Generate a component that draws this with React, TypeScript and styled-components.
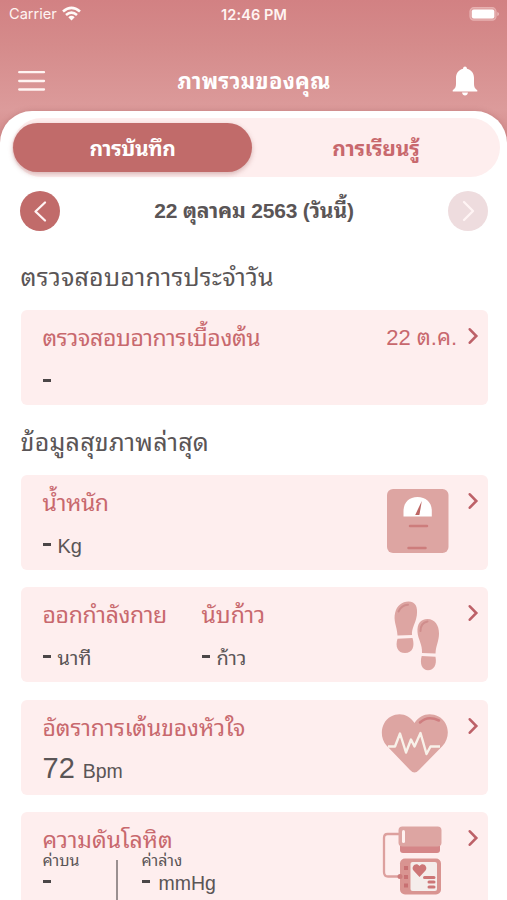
import React from "react";
import styled, { createGlobalStyle } from "styled-components";

const GlobalStyle = createGlobalStyle`
  * { box-sizing: border-box; }
  html, body { margin: 0; padding: 0; background: #fff; }
  body {
    height: 900px;
    overflow: hidden;
    font-family: "Liberation Sans", Thonburi, "Noto Sans Thai Looped", Loma, Garuda, Waree, sans-serif;
    color: #5a5556;
  }
`;

const Screen = styled.div`
  width: 507px;
  height: 900px;
  overflow: hidden;
  display: flex;
  flex-direction: column;
  background: linear-gradient(#d28183 0, #d58b8b 45px, #dc9b9b 110px, #d28a8a 145px);
`;

const StatusBar = styled.div`
  display: grid;
  grid-template-columns: 1fr auto 1fr;
  align-items: center;
  height: 28px;
  flex: none;
  padding: 0 8px 0 9px;
  color: #fff4f2;
  font-family: Inter, sans-serif;
`;

const Carrier = styled.div`
  display: flex;
  align-items: center;
  gap: 5px;
  font-size: 14.6px;
  svg { display: block; margin-top: -2px; }
`;

const Clock = styled.div`
  font-size: 14.5px;
  font-weight: 600;
  letter-spacing: 0.1px;
`;

const BatteryWrap = styled.div`
  display: flex;
  justify-content: flex-end;
`;

const NavBar = styled.header`
  display: grid;
  grid-template-columns: 28px 1fr 28px;
  justify-items: center;
  align-items: center;
  height: 83px;
  padding: 23px 28px 0 18px;
  flex: none;
  > svg { display: block; }
`;

const NavTitle = styled.div`
  padding: 1px 0 0 11px;
`;

const Text = styled.span<{ $size: number; $line?: number; $weight?: number; $track?: number; $color?: string }>`
  display: block;
  white-space: nowrap;
  font-size: ${(p) => p.$size}px;
  line-height: ${(p) => p.$line ?? 30}px;
  font-weight: ${(p) => p.$weight ?? 400};
  letter-spacing: ${(p) => p.$track ?? 0}px;
  color: ${(p) => p.$color ?? "#5a5556"};
`;

const Sheet = styled.main`
  flex: 1;
  min-height: 0;
  background: #fff;
  border-radius: 32px 32px 0 0;
  padding: 7px 7px 0 12px;
  box-shadow: 0 -1px 5px rgba(150, 80, 80, 0.25);
`;

const Tabs = styled.div`
  display: grid;
  grid-template-columns: 239px 1fr;
  align-items: center;
  height: 59px;
  padding-left: 1px;
  border-radius: 30px;
  background: #feeeee;
`;

const Tab = styled.div<{ $active?: boolean }>`
  display: flex;
  align-items: center;
  justify-content: center;
  height: 49px;
  padding-top: 2px;
  border-radius: 25px;
  background: ${(p) => (p.$active ? "#c16b6a" : "transparent")};
  box-shadow: ${(p) => (p.$active ? "0 2px 5px rgba(140, 70, 70, 0.35)" : "none")};
`;

const DateRow = styled.div`
  display: flex;
  align-items: center;
  justify-content: space-between;
  height: 68px;
  padding: 0 12px 0 8px;
`;

const RoundButton = styled.div<{ $muted?: boolean }>`
  width: 40px;
  height: 40px;
  border-radius: 50%;
  display: grid;
  place-items: center;
  background: ${(p) => (p.$muted ? "#eedcde" : "#c16b6a")};
`;

const Section = styled.section<{ $top: number; $gap: number }>`
  padding: ${(p) => p.$top}px 12px 0 8.5px;
  display: flex;
  flex-direction: column;
  gap: ${(p) => p.$gap}px;
`;

const CardList = styled.div`
  display: flex;
  flex-direction: column;
  gap: 17.4px;
`;

const Card = styled.article`
  display: grid;
  grid-template-columns: 1fr auto 24px;
  height: 95px;
  border-radius: 6px;
  background: #feeeee;
  padding-left: 22px;
`;

const Body = styled.div`
  display: flex;
  min-width: 0;
  padding-top: 13px;
`;

const Metric = styled.div<{ $width?: number }>`
  width: ${(p) => (p.$width ? `${p.$width}px` : "auto")};
`;

const ValueLine = styled.div<{ $gap: number; $top?: number; $align?: string }>`
  display: flex;
  align-items: ${(p) => p.$align ?? "center"};
  gap: ${(p) => p.$gap}px;
  padding-top: ${(p) => p.$top ?? 13}px;
`;

const EmptyValue = styled.div`
  padding-top: 26px;
`;

const Pressure = styled.div`
  padding-top: 13px;
`;

const Readings = styled.div`
  display: flex;
`;

const Reading = styled.div<{ $width?: number }>`
  width: ${(p) => (p.$width ? `${p.$width}px` : "auto")};
`;

const Divider = styled.div`
  width: 2px;
  height: 60px;
  margin: 5px 24px 0 0;
  background: #9a8f90;
`;

const ReadingValue = styled.div`
  display: flex;
  align-items: center;
  gap: 9px;
  height: 32px;
`;

const Dash = styled.span`
  display: block;
  width: 8px;
  height: 3px;
  background: #4b4647;
  ${ValueLine} & { margin-bottom: 3px; }
  ${ReadingValue} & { margin-bottom: 3px; }
`;

const IconCell = styled.div`
  width: 84px;
  svg { display: block; }
`;

const ChevronCell = styled.div`
  padding: 17px 0 0 3.5px;
  svg { display: block; }
`;

const DateCell = styled.div`
  padding: 13px 7px 0 0;
`;

const ROSE = "#c8686d";
const BLUSH = "#dda5a2";

const Chevron = () => (
  <ChevronCell>
    <svg width="12" height="18" viewBox="0 0 12 18" fill="none" stroke="#bd6168" strokeWidth="2.6" strokeLinecap="round">
      <path d="M1.8 2.3 8.3 9 1.8 15.7" />
    </svg>
  </ChevronCell>
);

const ArrowButton = ({ next }: { next?: boolean }) => (
  <RoundButton $muted={next}>
    <svg width="40" height="40" fill="none" stroke="#fff4f4" strokeWidth="2.3" strokeLinecap="round" strokeLinejoin="round">
      <path d={next ? "M16 11 25 20 16 29" : "M25 11.5 15.5 20.5 25 29.5"} />
    </svg>
  </RoundButton>
);

const Wifi = () => (
  <svg width="19" height="15" viewBox="0 0 19 15" fill="none" stroke="#fffaf8" strokeWidth="2.6">
    <path d="M1 5.6Q9.5-1.8 18 5.6M4 9Q9.5 4.3 15 9" />
    <path d="M6.3 11.2Q9.5 8.5 12.7 11.2L9.5 14.5Z" fill="#fffaf8" stroke="none" />
  </svg>
);

const Battery = () => (
  <svg width="30" height="14" viewBox="0 0 30 14">
    <rect x="1" y=".7" width="26" height="12.4" rx="3.8" fill="#dfa0a0" stroke="#e7b1b1" strokeWidth="1.2" />
    <rect x="2.8" y="2.4" width="22.5" height="9" rx="2" fill="#fff" />
    <path d="M28.4 5v4q1.500-.5 1.500-2t-1.500-2" fill="#eebfbf" />
  </svg>
);

const Bell = () => (
  <svg width="26" height="30" viewBox="0 0 26 30" fill="#fff">
    <path d="M13 .5c1 0 1.800.9 2 2.300C19.400 3.900 22 7.400 22 12v6c0 3 1 4.800 3.300 6.300v1.200H.7v-1.200C3 22.800 4 21 4 18v-6C4 7.400 6.600 3.900 11 2.800 11.200 1.400 12 .5 13 .5Z" />
    <path d="M10 26.600h6q-.6 3-3 3t-3-3Z" />
  </svg>
);

const Scale = () => (
  <svg width="72" height="95">
    <rect x="7" y="14" width="61.500" height="64" rx="6" fill={BLUSH} />
    <path d="M23.500 41.500v-5.500C23.500 27.500 29 22 37.500 22S51.800 27.500 51.800 36V41.500Z" fill="#fff" />
    <path d="M41.800 26 35.200 40h4.200Z" fill="#bd6664" />
    <path d="M30 51h17M28.500 73h17" stroke="#cd7d7c" strokeWidth="2.500" strokeLinecap="round" />
  </svg>
);

const Footsteps = () => (
  <svg width="72" height="95" fill={BLUSH}>
    <path d="M17.500 48.500C17 39 13 34 15.200 25.500 17 18.500 22 14.500 28.500 14.500c7 0 9.500 5.500 8.300 14C35.500 37 31.500 41 32 48Z" />
    <path d="M17.500 51.700 32.500 51c2.500 8.500 0 15-7.500 15s-10-6.500-7.500-14.300Z" />
    <path d="M42 66c.5-9-4-13.500-4.500-21-.5-8 3-13 10-13 7.500 0 11.500 6.500 11.500 14.500C59 54 56 58 55.500 66.500Z" />
    <path d="M41.700 69 55.500 69.700c1.500 8-1.500 13.500-7.500 13.500s-8.500-6.500-6.300-14.200Z" />
    <path d="M18.500 24.500Q21.500 18 28 17.700M40.500 44q0-8 7-9.500" fill="none" stroke="#cf8d8c" strokeWidth="2" strokeLinecap="round" />
  </svg>
);

const HeartRate = () => (
  <svg width="72" height="95">
    <path d="M34.500 72.500Q32.500 72.500 30 70L6.500 45.500C-1 37.500.5 22 11 16.500c8.500-4.500 18-2 23.500 6.500C40 14.500 49.500 12 58.500 16.500c10.500 5.500 12.500 20.500 4 29.500L39 70Q36.500 72.500 34.500 72.500Z" fill={BLUSH} />
    <path d="M40 22.500Q47.500 15 59 20.500" fill="none" stroke="#cf7e80" strokeWidth="2.500" strokeLinecap="round" />
    <path d="M8 46.500h7L20 33.500 26 52.500 31 39.500 34.500 46.500 40.500 33 46.500 54 50.500 46.500H60" fill="none" stroke="#f8f1e9" strokeWidth="2.400" strokeLinejoin="round" />
  </svg>
);

const PressureMonitor = () => (
  <svg width="72" height="95">
    <path d="M19 22H7.500Q4 22 4 26V60Q4 64.500 8 64.500H21" fill="none" stroke="#dda09e" strokeWidth="2.300" />
    <rect x="20" y="29" width="40" height="12" rx="3" fill="#d58688" />
    <rect x="18.500" y="14.500" width="43" height="20" rx="4" fill={BLUSH} />
    <rect x="22" y="18" width="3" height="13" rx="1.500" fill="#fff2f0" />
    <rect x="20" y="46.500" width="41" height="36" rx="5" fill="#d99491" />
    <rect x="30.500" y="50" width="26.500" height="29" rx="2" fill="#f5edeb" />
    <path d="M39.500 65 33.500 58.500c-3-3.500 2.500-9 6-4.500 3.500-4.500 9 1 6 4.500Z" fill="#cd7677" />
    <path d="M44.500 65.500h9.500M49 70h5M49 75h5" stroke="#cd7677" strokeWidth="3" strokeLinecap="round" />
    <path d="M24 54h4v4h-4zM24 63h4v4h-4zM24 71.500h4v4h-4z" fill="#c87072" />
    <circle cx="20" cy="64.500" r="2.500" fill="#cd7c7c" />
  </svg>
);

export default function App() {
  return (
    <>
      <GlobalStyle />
      <Screen>
        <StatusBar>
          <Carrier>Carrier <Wifi /></Carrier>
          <Clock>12:46 PM</Clock>
          <BatteryWrap><Battery /></BatteryWrap>
        </StatusBar>
        <NavBar>
          <svg width="28" height="22" stroke="#fff4f2" strokeWidth="2.300" strokeLinecap="round">
            <path d="M1.200 2.200H26M1.200 11H26M1.200 19.500H26" />
          </svg>
          <NavTitle><Text $size={22} $weight={700} $track={0.25} $color="#fff">ภาพรวมของคุณ</Text></NavTitle>
          <Bell />
        </NavBar>
        <Sheet>
          <Tabs>
            <Tab $active><Text $size={21} $weight={700} $track={-0.4} $color="#fff">การบันทึก</Text></Tab>
            <Tab><Text $size={21} $weight={700} $track={-0.15} $color={ROSE}>การเรียนรู้</Text></Tab>
          </Tabs>
          <DateRow>
            <ArrowButton />
            <Text $size={21} $weight={700} $track={-0.2}>22 ตุลาคม 2563 (วันนี้)</Text>
            <ArrowButton next />
          </DateRow>
          <Section $top={17} $gap={18}>
            <Text $size={25} $track={0.2}>ตรวจสอบอาการประจำวัน</Text>
            <Card>
              <Body>
                <Metric>
                  <Text $size={23} $track={-0.36} $color={ROSE}>ตรวจสอบอาการเบื้องต้น</Text>
                  <EmptyValue><Dash /></EmptyValue>
                </Metric>
              </Body>
              <DateCell><Text $size={22} $color={ROSE}>22 ต.ค.</Text></DateCell>
              <Chevron />
            </Card>
          </Section>
          <Section $top={22} $gap={18}>
            <Text $size={25} $track={0.25}>ข้อมูลสุขภาพล่าสุด</Text>
            <CardList>
              <Card>
                <Body>
                  <Metric>
                    <Text $size={23} $track={-0.4} $color={ROSE}>น้ำหนัก</Text>
                    <ValueLine $gap={7}><Dash /><Text $size={20}>Kg</Text></ValueLine>
                  </Metric>
                </Body>
                <IconCell><Scale /></IconCell>
                <Chevron />
              </Card>
              <Card>
                <Body>
                  <Metric $width={159}>
                    <Text $size={23} $track={-0.35} $color={ROSE}>ออกกำลังกาย</Text>
                    <ValueLine $gap={7}><Dash /><Text $size={20}>นาที</Text></ValueLine>
                  </Metric>
                  <Metric>
                    <Text $size={23} $color={ROSE}>นับก้าว</Text>
                    <ValueLine $gap={7}><Dash /><Text $size={20}>ก้าว</Text></ValueLine>
                  </Metric>
                </Body>
                <IconCell><Footsteps /></IconCell>
                <Chevron />
              </Card>
              <Card>
                <Body>
                  <Metric>
                    <Text $size={23} $track={-0.12} $color={ROSE}>อัตราการเต้นของหัวใจ</Text>
                    <ValueLine $gap={8} $top={10} $align="baseline"><Text $size={29}>72</Text><Text $size={19.5}>Bpm</Text></ValueLine>
                  </Metric>
                </Body>
                <IconCell><HeartRate /></IconCell>
                <Chevron />
              </Card>
              <Card>
                <Pressure>
                  <Text $size={23} $color={ROSE}>ความดันโลหิต</Text>
                  <Readings>
                    <Reading $width={73}>
                      <Text $size={16} $line={12}>ค่าบน</Text>
                      <ReadingValue><Dash /></ReadingValue>
                    </Reading>
                    <Divider />
                    <Reading>
                      <Text $size={16} $line={12}>ค่าล่าง</Text>
                      <ReadingValue><Dash /><Text $size={19.5}>mmHg</Text></ReadingValue>
                    </Reading>
                  </Readings>
                </Pressure>
                <IconCell><PressureMonitor /></IconCell>
                <Chevron />
              </Card>
            </CardList>
          </Section>
        </Sheet>
      </Screen>
    </>
  );
}
